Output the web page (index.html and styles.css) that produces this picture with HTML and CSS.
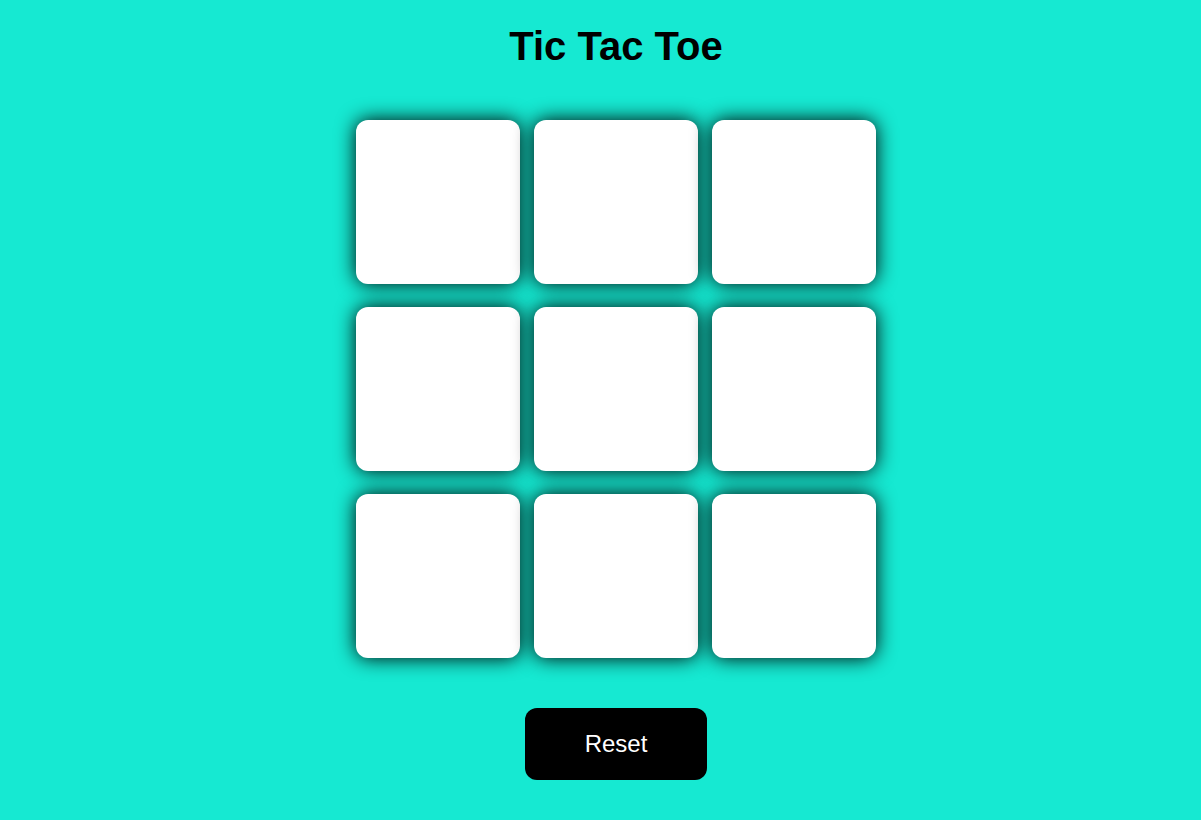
FILE: index.html
```html
<!DOCTYPE html>
<html>
<head>
<meta charset="utf-8">
<title>Tic Tac Toe</title>
<link rel="stylesheet" href="styles.css">
</head>
<body>
<main class="page">
  <h1 class="title">Tic Tac Toe</h1>
  <div class="board">
    <button class="box"></button>
    <button class="box"></button>
    <button class="box"></button>
    <button class="box"></button>
    <button class="box"></button>
    <button class="box"></button>
    <button class="box"></button>
    <button class="box"></button>
    <button class="box"></button>
  </div>
  <button class="reset">Reset</button>
</main>
</body>
</html>
```

FILE: styles.css
```css
html, body {
  margin: 0;
  padding: 0;
}
body {
  background: #16e9d2;
  font-family: "Liberation Sans", Arial, sans-serif;
  height: 820px;
}
.page {
  display: flex;
  flex-direction: column;
  align-items: center;
  padding-left: 31px;
}
.title {
  margin: 26px 0 0;
  font-size: 40px;
  line-height: 40px;
  font-weight: bold;
  color: #000;
}
.board {
  margin-top: 54px;
  display: grid;
  grid-template-columns: repeat(3, 164px);
  grid-template-rows: repeat(3, 164px);
  column-gap: 14px;
  row-gap: 23px;
}
.box {
  width: 164px;
  height: 164px;
  border: none;
  border-radius: 12px;
  background: #fff;
  box-shadow: 0 0 20px #000;
  padding: 0;
}
.reset {
  margin-top: 50px;
  width: 182px;
  height: 72px;
  border: none;
  border-radius: 12px;
  background: #000;
  color: #fff;
  font-family: "Liberation Sans", Arial, sans-serif;
  font-size: 24px;
  padding: 0;
}
```
